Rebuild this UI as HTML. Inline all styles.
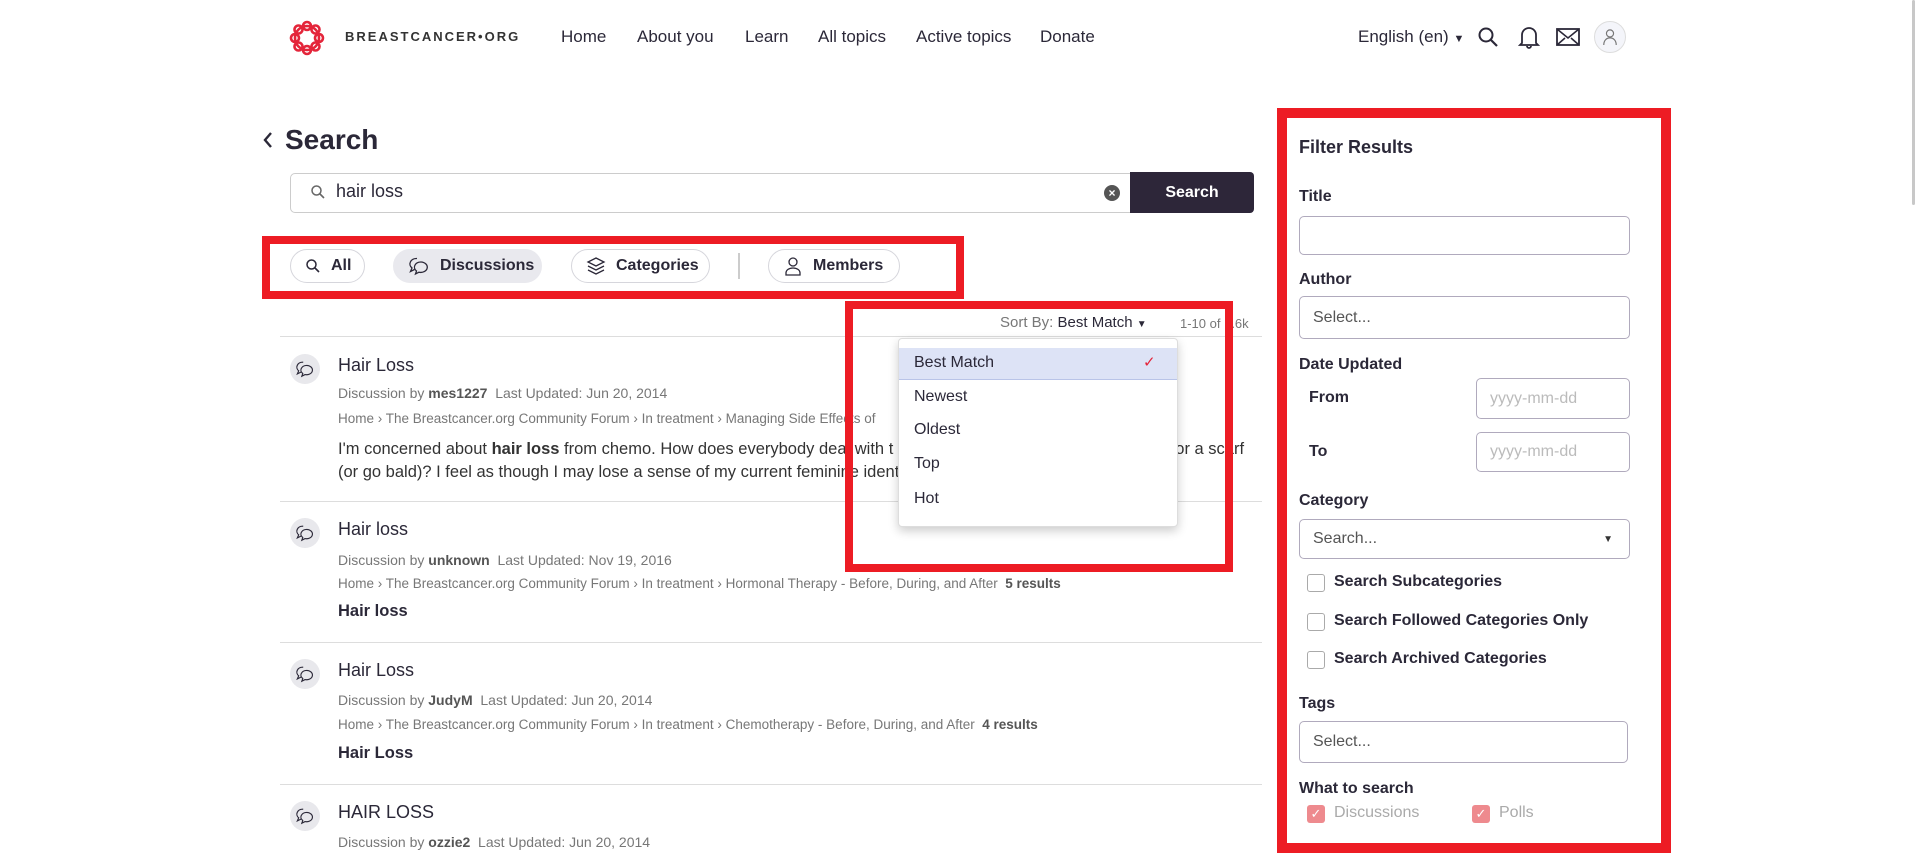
<!DOCTYPE html>
<html><head><meta charset="utf-8"><style>
*{box-sizing:border-box;margin:0;padding:0}
body{width:1920px;height:860px;overflow:hidden;background:#fff;font-family:"Liberation Sans",sans-serif;color:#2b2838;position:relative}
.a{position:absolute;white-space:nowrap}
.nav{font-size:17px;top:27px;color:#2b2838}
.pill{position:absolute;top:249px;height:34px;border:1px solid #d6d6dc;border-radius:17px;font-size:16px;font-weight:bold;display:flex;align-items:center;gap:10px;padding-left:14px;color:#2b2838}
.red{position:absolute;border:8px solid #ed1c24}
.ttl{font-size:18px;color:#2b2838;left:338px}
.meta{font-size:14px;color:#777;left:338px}
.meta b{color:#555}
.crumb{font-size:13.5px;color:#777;left:338px}
.crumb b{color:#555}
.hr{position:absolute;left:280px;width:982px;height:1px;background:#ddd}
.ic{position:absolute;left:290px;width:30px;height:30px;border-radius:50%;background:#e8e8ec;display:flex;align-items:center;justify-content:center}
.lbl{font-size:16px;font-weight:bold;left:1299px;color:#2b2838}
.inp{position:absolute;border:1px solid #b0aabd;border-radius:5px;background:#fff;font-size:16px;color:#555;padding-left:13px;display:flex;align-items:center}
.cb{position:absolute;left:1307px;width:18px;height:18px;border:1px solid #aaa;border-radius:3px}
.cbl{font-size:16px;font-weight:bold;left:1334px;color:#2b2838}
.dd{font-size:16px;left:914px;color:#2b2838}
</style></head><body>
<svg width="0" height="0" style="position:absolute"><defs><symbol id="disc" viewBox="0 0 22 20"><path d="M9 2.5a6.5 5.5 0 0 0-5 9.5l-1.5 3.5 4-2" fill="none" stroke="#2b2838" stroke-width="1.3"/><path d="M13 6a6.5 5.2 0 1 1-2 10.2l-3.5 1.8 1-3A6.5 5.2 0 0 1 13 6z" fill="none" stroke="#2b2838" stroke-width="1.3"/></symbol></defs></svg>
<!-- logo -->
<svg class="a" style="left:288px;top:19px" width="38" height="38" viewBox="0 0 38 38"><g fill="none" stroke="#e4253a" stroke-width="2.6"><circle cx="19" cy="19" r="12"/><circle cx="19" cy="7" r="4"/><circle cx="19" cy="31" r="4"/><circle cx="7" cy="19" r="4"/><circle cx="31" cy="19" r="4"/><circle cx="10.5" cy="10.5" r="4"/><circle cx="27.5" cy="27.5" r="4"/><circle cx="27.5" cy="10.5" r="4"/><circle cx="10.5" cy="27.5" r="4"/></g></svg>
<div class="a" style="left:345px;top:29px;font-size:13px;font-weight:bold;letter-spacing:2px;color:#333">BREASTCANCER•ORG</div>
<div class="a nav" style="left:561px">Home</div>
<div class="a nav" style="left:637px">About you</div>
<div class="a nav" style="left:745px">Learn</div>
<div class="a nav" style="left:818px">All topics</div>
<div class="a nav" style="left:916px">Active topics</div>
<div class="a nav" style="left:1040px">Donate</div>
<div class="a nav" style="left:1358px">English (en) <span style="font-size:11px">▼</span></div>
<svg class="a" style="left:1477px;top:26px" width="22" height="22" viewBox="0 0 22 22"><circle cx="9" cy="9" r="6.5" fill="none" stroke="#2b2838" stroke-width="2"/><path d="M14 14l6 6" stroke="#2b2838" stroke-width="2.2"/></svg>
<svg class="a" style="left:1518px;top:25px" width="22" height="24" viewBox="0 0 22 24"><path d="M4 18V10a7 7 0 0 1 14 0v8l2 2H2z M9 21a2 2 0 0 0 4 0" fill="none" stroke="#2b2838" stroke-width="1.8"/></svg>
<svg class="a" style="left:1556px;top:28px" width="24" height="18" viewBox="0 0 24 18"><rect x="1" y="1" width="22" height="16" fill="none" stroke="#2b2838" stroke-width="1.8"/><path d="M1 1l11 9 11-9M1 17l8-7M23 17l-8-7" fill="none" stroke="#2b2838" stroke-width="1.6"/></svg>
<div class="a" style="left:1594px;top:21px;width:32px;height:32px;border-radius:50%;border:1px solid #ddd;background:#f4f5fa"></div>
<svg class="a" style="left:1602px;top:28px" width="16" height="18" viewBox="0 0 18 20"><circle cx="9" cy="6" r="4" fill="none" stroke="#777" stroke-width="1.3"/><path d="M2 19c0-5 3-8 7-8s7 3 7 8" fill="none" stroke="#777" stroke-width="1.3"/></svg>

<!-- search title -->
<svg class="a" style="left:261px;top:130px" width="14" height="20" viewBox="0 0 14 20"><path d="M10 3L4 10l6 7" fill="none" stroke="#2b2838" stroke-width="2.4"/></svg>
<div class="a" style="left:285px;top:124px;font-size:28px;font-weight:bold;color:#2b2838">Search</div>
<div class="a" style="left:290px;top:173px;width:850px;height:40px;border:1px solid #ccc;border-radius:5px"></div>
<svg class="a" style="left:310px;top:184px" width="16" height="16" viewBox="0 0 16 16"><circle cx="6.5" cy="6.5" r="4.5" fill="none" stroke="#666" stroke-width="1.5"/><path d="M10 10l4 4" stroke="#666" stroke-width="1.6"/></svg>
<div class="a" style="left:336px;top:181px;font-size:18px;color:#2b2838">hair loss</div>
<div class="a" style="left:1104px;top:185px;width:16px;height:16px;border-radius:50%;background:#555;color:#fff;font-size:12px;line-height:16px;text-align:center;font-weight:bold">×</div>
<div class="a" style="left:1130px;top:172px;width:124px;height:41px;background:#2d2639;border-radius:0 4px 4px 0;color:#fff;font-size:16px;font-weight:bold;text-align:center;line-height:41px">Search</div>

<!-- pills -->
<div class="pill" style="left:290px;width:75px"><svg width="16" height="16" viewBox="0 0 16 16"><circle cx="6.5" cy="6.5" r="4.5" fill="none" stroke="#2b2838" stroke-width="1.5"/><path d="M10 10l4 4" stroke="#2b2838" stroke-width="1.6"/></svg>All</div>
<div class="pill" style="left:393px;width:149px;background:#e9e9ee;border-color:#e9e9ee"><svg width="22" height="20"><use href="#disc"/></svg>Discussions</div>
<div class="pill" style="left:571px;width:139px"><svg width="20" height="20" viewBox="0 0 20 20"><path d="M10 2l8 4-8 4-8-4z M2 10l8 4 8-4 M2 14l8 4 8-4" fill="none" stroke="#2b2838" stroke-width="1.3"/></svg>Categories</div>
<div class="a" style="left:738px;top:253px;width:2px;height:26px;background:#ccc"></div>
<div class="pill" style="left:768px;width:132px"><svg width="20" height="20" viewBox="0 0 20 20"><circle cx="10" cy="6" r="4" fill="none" stroke="#2b2838" stroke-width="1.3"/><path d="M3 19v-2c0-3 3-5 7-5s7 2 7 5v2z" fill="none" stroke="#2b2838" stroke-width="1.3"/></svg>Members</div>
<div class="red" style="left:262px;top:236px;width:702px;height:63px"></div>

<!-- sort -->
<div class="a" style="left:1000px;top:314px;font-size:15px;color:#777">Sort By: <span style="color:#2b2838">Best Match <span style="font-size:10px">▼</span></span></div>
<div class="a" style="left:1180px;top:316px;font-size:13px;color:#777">1-10 of 1.6k</div>
<div class="hr" style="top:336px"></div>

<!-- results -->
<div class="ic" style="top:354px"><svg width="20" height="18"><use href="#disc"/></svg></div>
<div class="a ttl" style="top:355px">Hair Loss</div>
<div class="a meta" style="top:385px">Discussion by <b>mes1227</b>&nbsp;&nbsp;Last Updated: Jun 20, 2014</div>
<div class="a crumb" style="top:411px">Home › The Breastcancer.org Community Forum › In treatment › Managing Side Effects of</div>
<div class="a" style="left:338px;top:438px;font-size:16.5px;color:#333;line-height:23px">I'm concerned about <b>hair loss</b> from chemo. How does everybody deal with t<span style="padding-left:282px">or a scarf</span><br>(or go bald)? I feel as though I may lose a sense of my current feminine ident</div>
<div class="hr" style="top:501px"></div>

<div class="ic" style="top:518px"><svg width="20" height="18"><use href="#disc"/></svg></div>
<div class="a ttl" style="top:519px">Hair loss</div>
<div class="a meta" style="top:552px">Discussion by <b>unknown</b>&nbsp;&nbsp;Last Updated: Nov 19, 2016</div>
<div class="a crumb" style="top:576px">Home › The Breastcancer.org Community Forum › In treatment › Hormonal Therapy - Before, During, and After&nbsp;&nbsp;<b>5 results</b></div>
<div class="a" style="left:338px;top:602px;font-size:16.5px;font-weight:bold;color:#2b2838">Hair loss</div>
<div class="hr" style="top:642px"></div>

<div class="ic" style="top:659px"><svg width="20" height="18"><use href="#disc"/></svg></div>
<div class="a ttl" style="top:660px">Hair Loss</div>
<div class="a meta" style="top:692px">Discussion by <b>JudyM</b>&nbsp;&nbsp;Last Updated: Jun 20, 2014</div>
<div class="a crumb" style="top:717px">Home › The Breastcancer.org Community Forum › In treatment › Chemotherapy - Before, During, and After&nbsp;&nbsp;<b>4 results</b></div>
<div class="a" style="left:338px;top:744px;font-size:16.5px;font-weight:bold;color:#2b2838">Hair Loss</div>
<div class="hr" style="top:784px"></div>

<div class="ic" style="top:801px"><svg width="20" height="18"><use href="#disc"/></svg></div>
<div class="a ttl" style="top:802px">HAIR LOSS</div>
<div class="a meta" style="top:834px">Discussion by <b>ozzie2</b>&nbsp;&nbsp;Last Updated: Jun 20, 2014</div>

<!-- dropdown -->
<div class="a" style="left:898px;top:338px;width:280px;height:189px;background:#fff;border:1px solid #ddd;border-radius:4px;box-shadow:0 4px 10px rgba(0,0,0,.2)"></div>
<div class="a" style="left:899px;top:348px;width:278px;height:32px;background:#dde3f6;border-bottom:1px solid #b9c4e8"></div>
<div class="a dd" style="top:354px">Best Match</div>
<div class="a" style="left:1143px;top:353px;color:#e4253a;font-size:15px">✓</div>
<div class="a dd" style="top:388px">Newest</div>
<div class="a dd" style="top:421px">Oldest</div>
<div class="a dd" style="top:455px">Top</div>
<div class="a dd" style="top:490px">Hot</div>
<div class="red" style="left:845px;top:301px;width:388px;height:271px"></div>

<!-- filter -->
<div class="a" style="left:1299px;top:137px;font-size:18px;font-weight:bold">Filter Results</div>
<div class="a lbl" style="top:188px">Title</div>
<div class="inp" style="left:1299px;top:216px;width:331px;height:39px"></div>
<div class="a lbl" style="top:271px">Author</div>
<div class="inp" style="left:1299px;top:296px;width:331px;height:43px">Select...</div>
<div class="a lbl" style="top:356px">Date Updated</div>
<div class="a lbl" style="top:389px;left:1309px">From</div>
<div class="inp" style="left:1476px;top:378px;width:154px;height:41px;color:#bbb">yyyy-mm-dd</div>
<div class="a lbl" style="top:443px;left:1309px">To</div>
<div class="inp" style="left:1476px;top:432px;width:154px;height:40px;color:#bbb">yyyy-mm-dd</div>
<div class="a lbl" style="top:492px">Category</div>
<div class="inp" style="left:1299px;top:519px;width:331px;height:40px">Search...<span style="position:absolute;right:16px;font-size:10px;color:#333">▼</span></div>
<div class="cb" style="top:574px"></div><div class="a cbl" style="top:573px">Search Subcategories</div>
<div class="cb" style="top:613px"></div><div class="a cbl" style="top:612px">Search Followed Categories Only</div>
<div class="cb" style="top:651px"></div><div class="a cbl" style="top:650px">Search Archived Categories</div>
<div class="a lbl" style="top:695px">Tags</div>
<div class="inp" style="left:1299px;top:721px;width:329px;height:42px">Select...</div>
<div class="a lbl" style="top:780px">What to search</div>
<div class="a" style="left:1307px;top:805px;width:18px;height:18px;border-radius:3px;background:#ee8a8e;color:#fff;font-size:13px;text-align:center;line-height:18px">✓</div>
<div class="a" style="left:1334px;top:804px;font-size:16px;color:#aaa">Discussions</div>
<div class="a" style="left:1472px;top:805px;width:18px;height:18px;border-radius:3px;background:#ee8a8e;color:#fff;font-size:13px;text-align:center;line-height:18px">✓</div>
<div class="a" style="left:1499px;top:804px;font-size:16px;color:#aaa">Polls</div>
<div class="red" style="left:1277px;top:108px;width:394px;height:745px;border-width:10px"></div>

<div class="a" style="left:1912px;top:0;width:3px;height:205px;background:#c8c8c8;border-radius:2px"></div>
</body></html>
